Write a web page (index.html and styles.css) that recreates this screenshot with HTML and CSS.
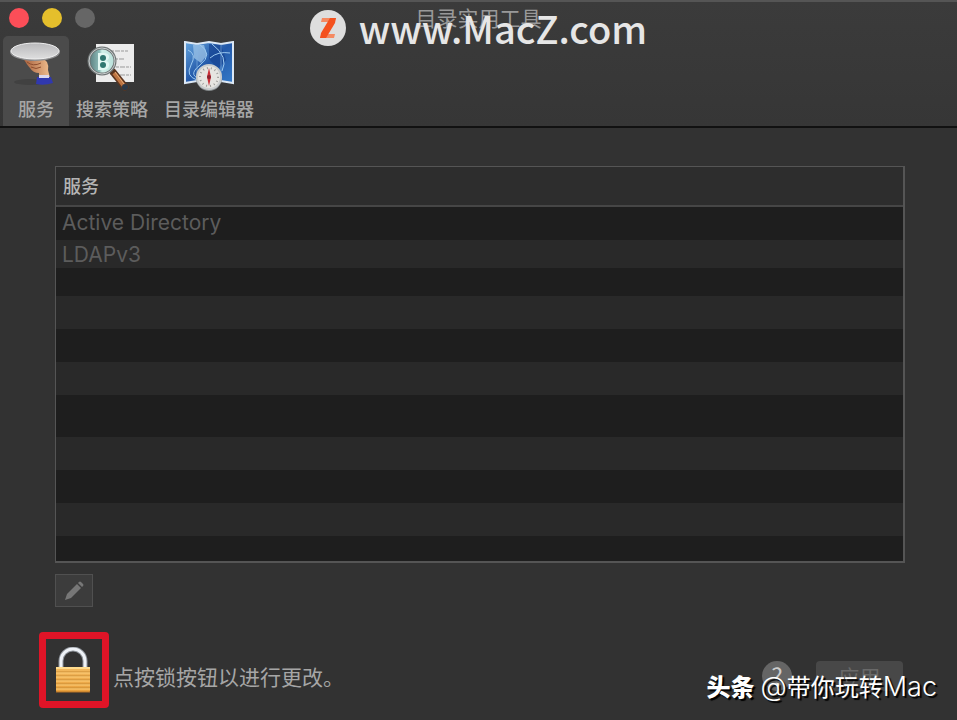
FILE: index.html
```html
<!DOCTYPE html>
<html lang="zh-CN">
<head>
    <meta charset="UTF-8">
    <meta name="viewport" content="width=device-width, initial-scale=1.0">
    <title>目录实用工具</title>
    <link rel="stylesheet" href="styles.css">
</head>
<body>
    <div class="window">
        <header class="header">
            <div class="titlebar">
                <div class="lights">
                    <button class="light close" aria-label="关闭"></button>
                    <button class="light minimize" aria-label="最小化"></button>
                    <button class="light zoom" aria-label="缩放" disabled></button>
                </div>
                <h1>目录实用工具</h1>
            </div>

            <nav class="toolbar">
                <button class="tool active">
                    <svg width="52" height="52" viewBox="0 0 52 52">
                        <defs>
                            <linearGradient id="plate" x1="0" y1="0" x2="0" y2="1">
                                <stop offset="0" stop-color="#b8b8ba"/>
                                <stop offset="1" stop-color="#dededf"/>
                            </linearGradient>
                            <linearGradient id="skin" x1="0" y1="0" x2="1" y2="0">
                                <stop offset="0" stop-color="#a65f3c"/>
                                <stop offset="1" stop-color="#efbd8d"/>
                            </linearGradient>
                        </defs>
                        <ellipse cx="20" cy="41" rx="16" ry="3" fill="#2c2c2c" opacity=".3"/>
                        <path d="M13 17 Q17 19 21 20 L34 18 L37 21 Q39 25 38 29 L40 37 L29 37 L29 32 Q23 32 20 27 Q17 24 13 17 Z" fill="url(#skin)"/>
                        <path d="M17 21 Q23 26 31 22 M21 26 Q26 29 31 26" fill="none" stroke="#8f4f30" stroke-width="1"/>
                        <path d="M27 36 L41 36 L43 42 Q34 45 26 43 Z" fill="#3038ae"/>
                        <path d="M29 34 H39 V37 H29 Z" fill="#dbd8ed"/>
                        <ellipse cx="25" cy="11" rx="25" ry="9" fill="#909092"/>
                        <ellipse cx="25" cy="10" rx="24" ry="8" fill="url(#plate)" stroke="#eee"/>
                    </svg>
                    <span>服务</span>
                </button>
                <button class="tool">
                    <svg width="52" height="52" viewBox="0 0 52 52">
                        <defs>
                            <linearGradient id="glass" x1="0" y1="0" x2="1" y2="0">
                                <stop offset="0" stop-color="#587b7d"/>
                                <stop offset=".4" stop-color="#8dbcb8"/>
                                <stop offset=".5" stop-color="#d1f1ea"/>
                                <stop offset="1" stop-color="#b8dfd9"/>
                            </linearGradient>
                        </defs>
                        <path d="M10 3 H48 V41 H10 Z" fill="#ececec"/>
                        <path d="M25 10 H42 M29 18 H38 M30 26 H45 M30 34 H45" stroke="#999" stroke-width="1" stroke-dasharray="3 1 5 1"/>
                        <path d="M27 31 L39 46" stroke="#5a3520" stroke-width="7" stroke-linecap="round"/>
                        <path d="M28 32 L38 45" stroke="#bd7442" stroke-width="4"/>
                        <path d="M29 31 L38 43" stroke="#e6aa75" stroke-width="1"/>
                        <circle cx="39" cy="46" r="3" fill="#29394a"/>
                        <circle cx="16" cy="20" r="13" fill="url(#glass)" stroke="#6f7575" stroke-width="3"/>
                        <circle cx="16" cy="20" r="13" fill="none" stroke="#cacfd0" stroke-width="1"/>
                        <path d="M12 12 H17 Q24 12 23 17 Q22 19 20 20 Q24 21 23 25 Q22 29 16 29 H12 Z" fill="#e2f8f3"/>
                        <circle cx="17" cy="17" r="3" fill="#2f7770"/>
                        <circle cx="17" cy="24" r="3" fill="#2f7770"/>
                    </svg>
                    <span>搜索策略</span>
                </button>
                <button class="tool">
                    <svg width="52" height="52" viewBox="0 0 52 52">
                        <defs>
                            <linearGradient id="sea" x1="0" y1="0" x2="1" y2="1">
                                <stop offset="0" stop-color="#64a4de"/>
                                <stop offset=".5" stop-color="#2359a9"/>
                                <stop offset="1" stop-color="#347ac8"/>
                            </linearGradient>
                        </defs>
                        <path d="M2 1 L14 3 L26 1 L38 3 L50 1 V42 L38 40 L26 42 L14 40 L2 42 Z" fill="url(#sea)" stroke="#dce8f5" stroke-width="2"/>
                        <path d="M10 4 L21 4 L24 14 L18 22 L11 17 Z" fill="#a4c9ea" opacity=".7"/>
                        <path d="M26 3 L38 4 L43 19 L35 28 L26 18 Z" fill="#164391" opacity=".7"/>
                        <path d="M5 9 Q14 13 8 24 T14 39 M16 3 Q31 13 17 24 T20 39 M29 3 Q46 16 39 30 M27 17 Q35 10 47 12" fill="none" stroke="#9dcaf0" stroke-width="1"/>
                        <path d="M14 3 V40 M38 3 V40" stroke="#89b8e5" opacity=".6"/>
                        <circle cx="26" cy="37" r="13" fill="#858a8c"/>
                        <circle cx="26" cy="36" r="12" fill="#e6e5e1" stroke="#c9cdce" stroke-width="2"/>
                        <circle cx="26" cy="36" r="9" fill="none" stroke="#9c9c99" stroke-width="2" stroke-dasharray="1 3"/>
                        <path d="M26 27 L28 36 L26 45 L24 36 Z" fill="#ca3037"/>
                        <circle cx="26" cy="36" r="2" fill="#8c2430"/>
                    </svg>
                    <span>目录编辑器</span>
                </button>
            </nav>
        </header>

        <main class="content">
            <table class="services">
                <thead>
                    <tr><th>服务</th></tr>
                </thead>
                <tbody>
                    <tr><td>Active Directory</td></tr>
                    <tr class="short"><td>LDAPv3</td></tr>
                    <tr class="short"><td></td></tr>
                    <tr><td></td></tr>
                    <tr><td></td></tr>
                    <tr><td></td></tr>
                    <tr class="tall"><td></td></tr>
                    <tr><td></td></tr>
                    <tr><td></td></tr>
                    <tr><td></td></tr>
                    <tr class="last"><td></td></tr>
                </tbody>
            </table>

            <button class="edit" aria-label="编辑">
                <svg width="20" height="20" viewBox="0 0 20 20" fill="#777">
                    <path d="M1 19 L3 13 L13 3 L17 7 L7 17 Z"/>
                    <path d="M14 2 L15 1 Q16 0 17 1 L19 3 Q20 4 19 5 L18 6 Z"/>
                </svg>
            </button>
        </main>

        <footer class="footer">
            <button class="lock" aria-label="锁">
                <svg width="36" height="46" viewBox="0 0 36 46">
                    <defs>
                        <linearGradient id="gold" x1="0" y1="0" x2="0" y2="1">
                            <stop offset="0" stop-color="#f3ba60"/>
                            <stop offset="1" stop-color="#e8a03c"/>
                        </linearGradient>
                    </defs>
                    <path d="M5 22 V14 A12 12 0 0 1 29 14 V22" fill="none" stroke="#8d9299" stroke-width="5"/>
                    <path d="M5 22 V14 A12 12 0 0 1 29 14 V22" fill="none" stroke="#eef2f7" stroke-width="3"/>
                    <rect x="0" y="20" width="34" height="25" rx="1" fill="url(#gold)"/>
                    <path d="M0 21 H34" stroke="#ffdc8f" stroke-width="2"/>
                    <path d="M0 25 H34 M0 29 H34 M0 33 H34 M0 37 H34 M0 41 H34" stroke="#c98a35" stroke-width="1"/>
                    <path d="M0 26 H34 M0 30 H34 M0 34 H34 M0 38 H34 M0 42 H34" stroke="#ffd07a" stroke-width="1"/>
                    <path d="M0 45 H34" stroke="#b87224"/>
                </svg>
            </button>
            <p>点按锁按钮以进行更改。</p>
            <button class="help" aria-label="帮助">?</button>
            <button class="apply" disabled>应用</button>
        </footer>

        <div class="site-mark">
            <svg width="36" height="36" viewBox="0 0 36 36">
                <circle cx="18" cy="18" r="18" fill="#dedede"/>
                <path d="M12 8 H26 L24 12 H11 Z M12 24 H25 L24 28 H10 Z" fill="#f58a62"/>
                <path d="M20 8 H26 L25 13 L16 28 H10 L11 23 Z" fill="#f4511e"/>
            </svg>
            <span>www.MacZ.com</span>
        </div>
        <div class="author-mark">
            <b>头条</b>
            <span><span class="latin">@</span>带你玩转<span class="latin">Mac</span></span>
        </div>
    </div>
</body>
</html>
```
FILE: styles.css
```css
* {
    box-sizing: border-box;
}

body {
    margin: 0;
    background: #323232;
    color: #a6a6a6;
    font-family: "Noto Sans CJK SC", sans-serif;
}

button {
    margin: 0;
    padding: 0;
    border: none;
    background: none;
    color: inherit;
    font-family: inherit;
}

svg {
    display: block;
}

.window {
    position: relative;
    display: flex;
    flex-direction: column;
    min-height: 100vh;
}

.header {
    background: linear-gradient(#3b3b3b, #363636);
    border-top: 2px solid #555;
    border-bottom: 2px solid #111;
}

.titlebar {
    display: grid;
    grid-template-columns: 1fr auto 1fr;
    align-items: start;
    height: 34px;
    padding: 0 9px;
}

.titlebar h1 {
    margin: 0;
    font-size: 21px;
    font-weight: 400;
    line-height: 30px;
    color: #999;
}

.lights {
    display: flex;
    gap: 13px;
    padding-top: 6px;
}

.light {
    width: 20px;
    height: 20px;
    border-radius: 50%;
}

.close { background: #fc4e58; }
.minimize { background: #e5bf2c; }
.zoom { background: #666; }

.toolbar {
    display: flex;
    padding-left: 3px;
}

.tool {
    display: flex;
    flex-direction: column;
    align-items: center;
    gap: 3px;
    min-width: 65px;
    height: 90px;
    padding: 5px 7px 0;
    border-radius: 5px 5px 0 0;
    font-size: 18px;
    font-weight: 500;
    line-height: 24px;
    color: #a6a6a6;
}

.tool:last-child {
    margin-left: 2px;
}

.tool.active {
    background: #4b4b4b;
}

/* Lista de servicios */
.content {
    flex: 1;
    padding: 38px 52px 0 55px;
}

.services {
    width: 100%;
    border-collapse: separate;
    border-spacing: 0;
    border: 1px solid #555;
    border-right-width: 2px;
    border-bottom-width: 2px;
}

.services th {
    height: 40px;
    padding: 0 7px 2px;
    border-bottom: 2px solid #464646;
    background: #2d2d2d;
    font-size: 18px;
    font-weight: 500;
    line-height: 24px;
    text-align: left;
    color: #b4b4b4;
}

.services td {
    height: 33px;
    padding: 0 6px;
    background: #1e1e1e;
    font-family: Inter, sans-serif;
    font-size: 21px;
    line-height: 26px;
    color: #5c5c5c;
}

.services tbody tr:first-child td {
    padding-bottom: 2px;
}

.services tr:nth-child(even) td {
    background: #292929;
}

.services .short td {
    height: 28px;
    padding-top: 2px;
}

.services .tall td { height: 42px; }
.services .last td { height: 25px; }

.edit {
    display: flex;
    align-items: center;
    justify-content: center;
    width: 38px;
    height: 33px;
    margin-top: 11px;
    border: 1px solid #505050;
    background: #3c3c3c;
}

.footer {
    display: flex;
    align-items: center;
    padding: 0 54px 12px 39px;
}

.lock {
    display: flex;
    align-items: center;
    justify-content: center;
    width: 70px;
    height: 76px;
    border: 7px solid #df1427;
    border-radius: 4px;
}

.footer p {
    margin: 12px auto 0 4px;
    font-size: 21px;
    line-height: 30px;
}

.help,
.apply {
    height: 30px;
    margin-top: 12px;
    line-height: 28px;
}

.help {
    width: 30px;
    margin-right: 24px;
    border-radius: 50%;
    background: #656565;
    font-size: 24px;
    color: #ccc;
}

.apply {
    width: 87px;
    border-radius: 4px;
    background: #484848;
    font-size: 21px;
    color: #696969;
}

/* Marcas superpuestas */
.site-mark {
    position: absolute;
    top: 0;
    left: 0;
    right: 0;
    display: flex;
    align-items: center;
    justify-content: center;
    gap: 13px;
    font-size: 38px;
    font-weight: 500;
    line-height: 56px;
    color: #e6e6e6;
}

.author-mark {
    position: absolute;
    right: 20px;
    bottom: 16px;
    display: flex;
    align-items: baseline;
    gap: 6px;
    font-size: 24px;
    line-height: 34px;
    color: #fff;
    text-shadow: 2px 2px 1px #000;
}

.author-mark b {
    font-weight: 900;
}

.latin {
    font-family: Inter, sans-serif;
    font-size: 27px;
    font-weight: 300;
}
```
